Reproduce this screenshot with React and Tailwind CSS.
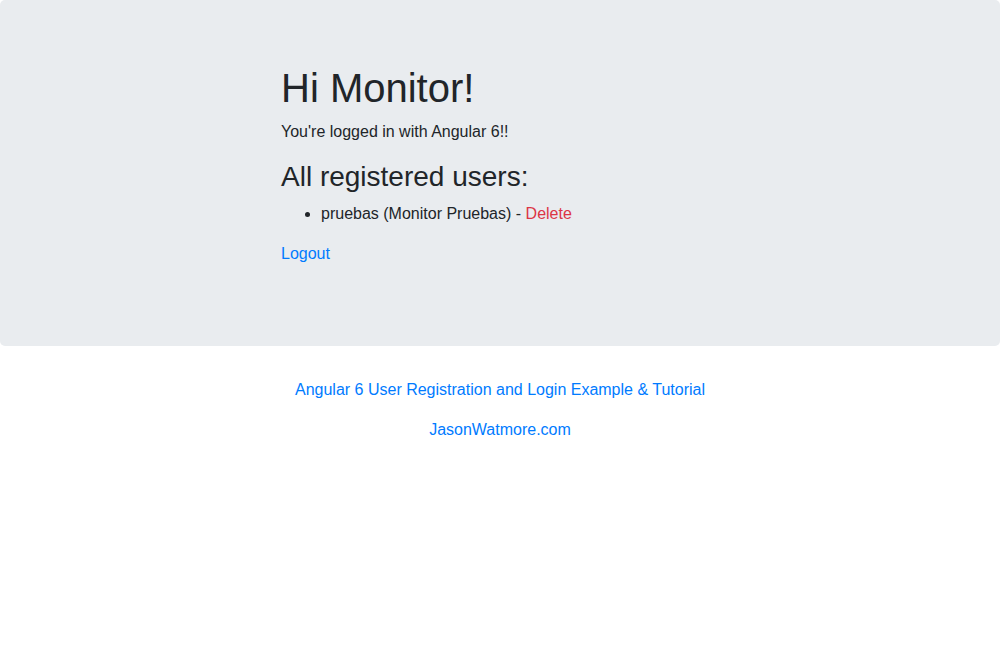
const users = [{ id: 1, username: "pruebas", firstName: "Monitor", lastName: "Pruebas" }];

function HomePage() {
  return (
    <div>
      <h1 className="mb-2 text-[40px] leading-[48px] font-medium">Hi Monitor!</h1>
      <p className="mb-4">You're logged in with Angular 6!!</p>
      <h3 className="mb-2 text-[28px] leading-[34px] font-medium">All registered users:</h3>
      <ul className="mb-4 list-disc pl-10">
        {users.map((user) => (
          <li key={user.id}>
            {user.username} ({user.firstName} {user.lastName}) -{" "}
            <a href="#delete" className="text-[#dc3545] hover:underline">Delete</a>
          </li>
        ))}
      </ul>
      <p className="mb-4">
        <a href="#logout" className="text-[#007bff] hover:underline">Logout</a>
      </p>
    </div>
  );
}

export default function App() {
  return (
    <div className="bg-white font-['Liberation_Sans',Arial,sans-serif] text-base leading-6 text-[#212529]">
      <main className="mb-8 rounded-[5px] bg-[#e9ecef] px-4 py-8 sm:px-8 sm:py-16">
        <div className="mx-auto grid max-w-[1140px] sm:grid-cols-4">
          <div className="px-[15px] sm:col-span-2 sm:col-start-2">
            <HomePage />
          </div>
        </div>
      </main>
      <footer className="text-center">
        <p className="mb-4">
          <a href="#tutorial" className="text-[#007bff] hover:underline">
            Angular 6 User Registration and Login Example &amp; Tutorial
          </a>
        </p>
        <p>
          <a href="#home" className="text-[#007bff] hover:underline">JasonWatmore.com</a>
        </p>
      </footer>
    </div>
  );
}
